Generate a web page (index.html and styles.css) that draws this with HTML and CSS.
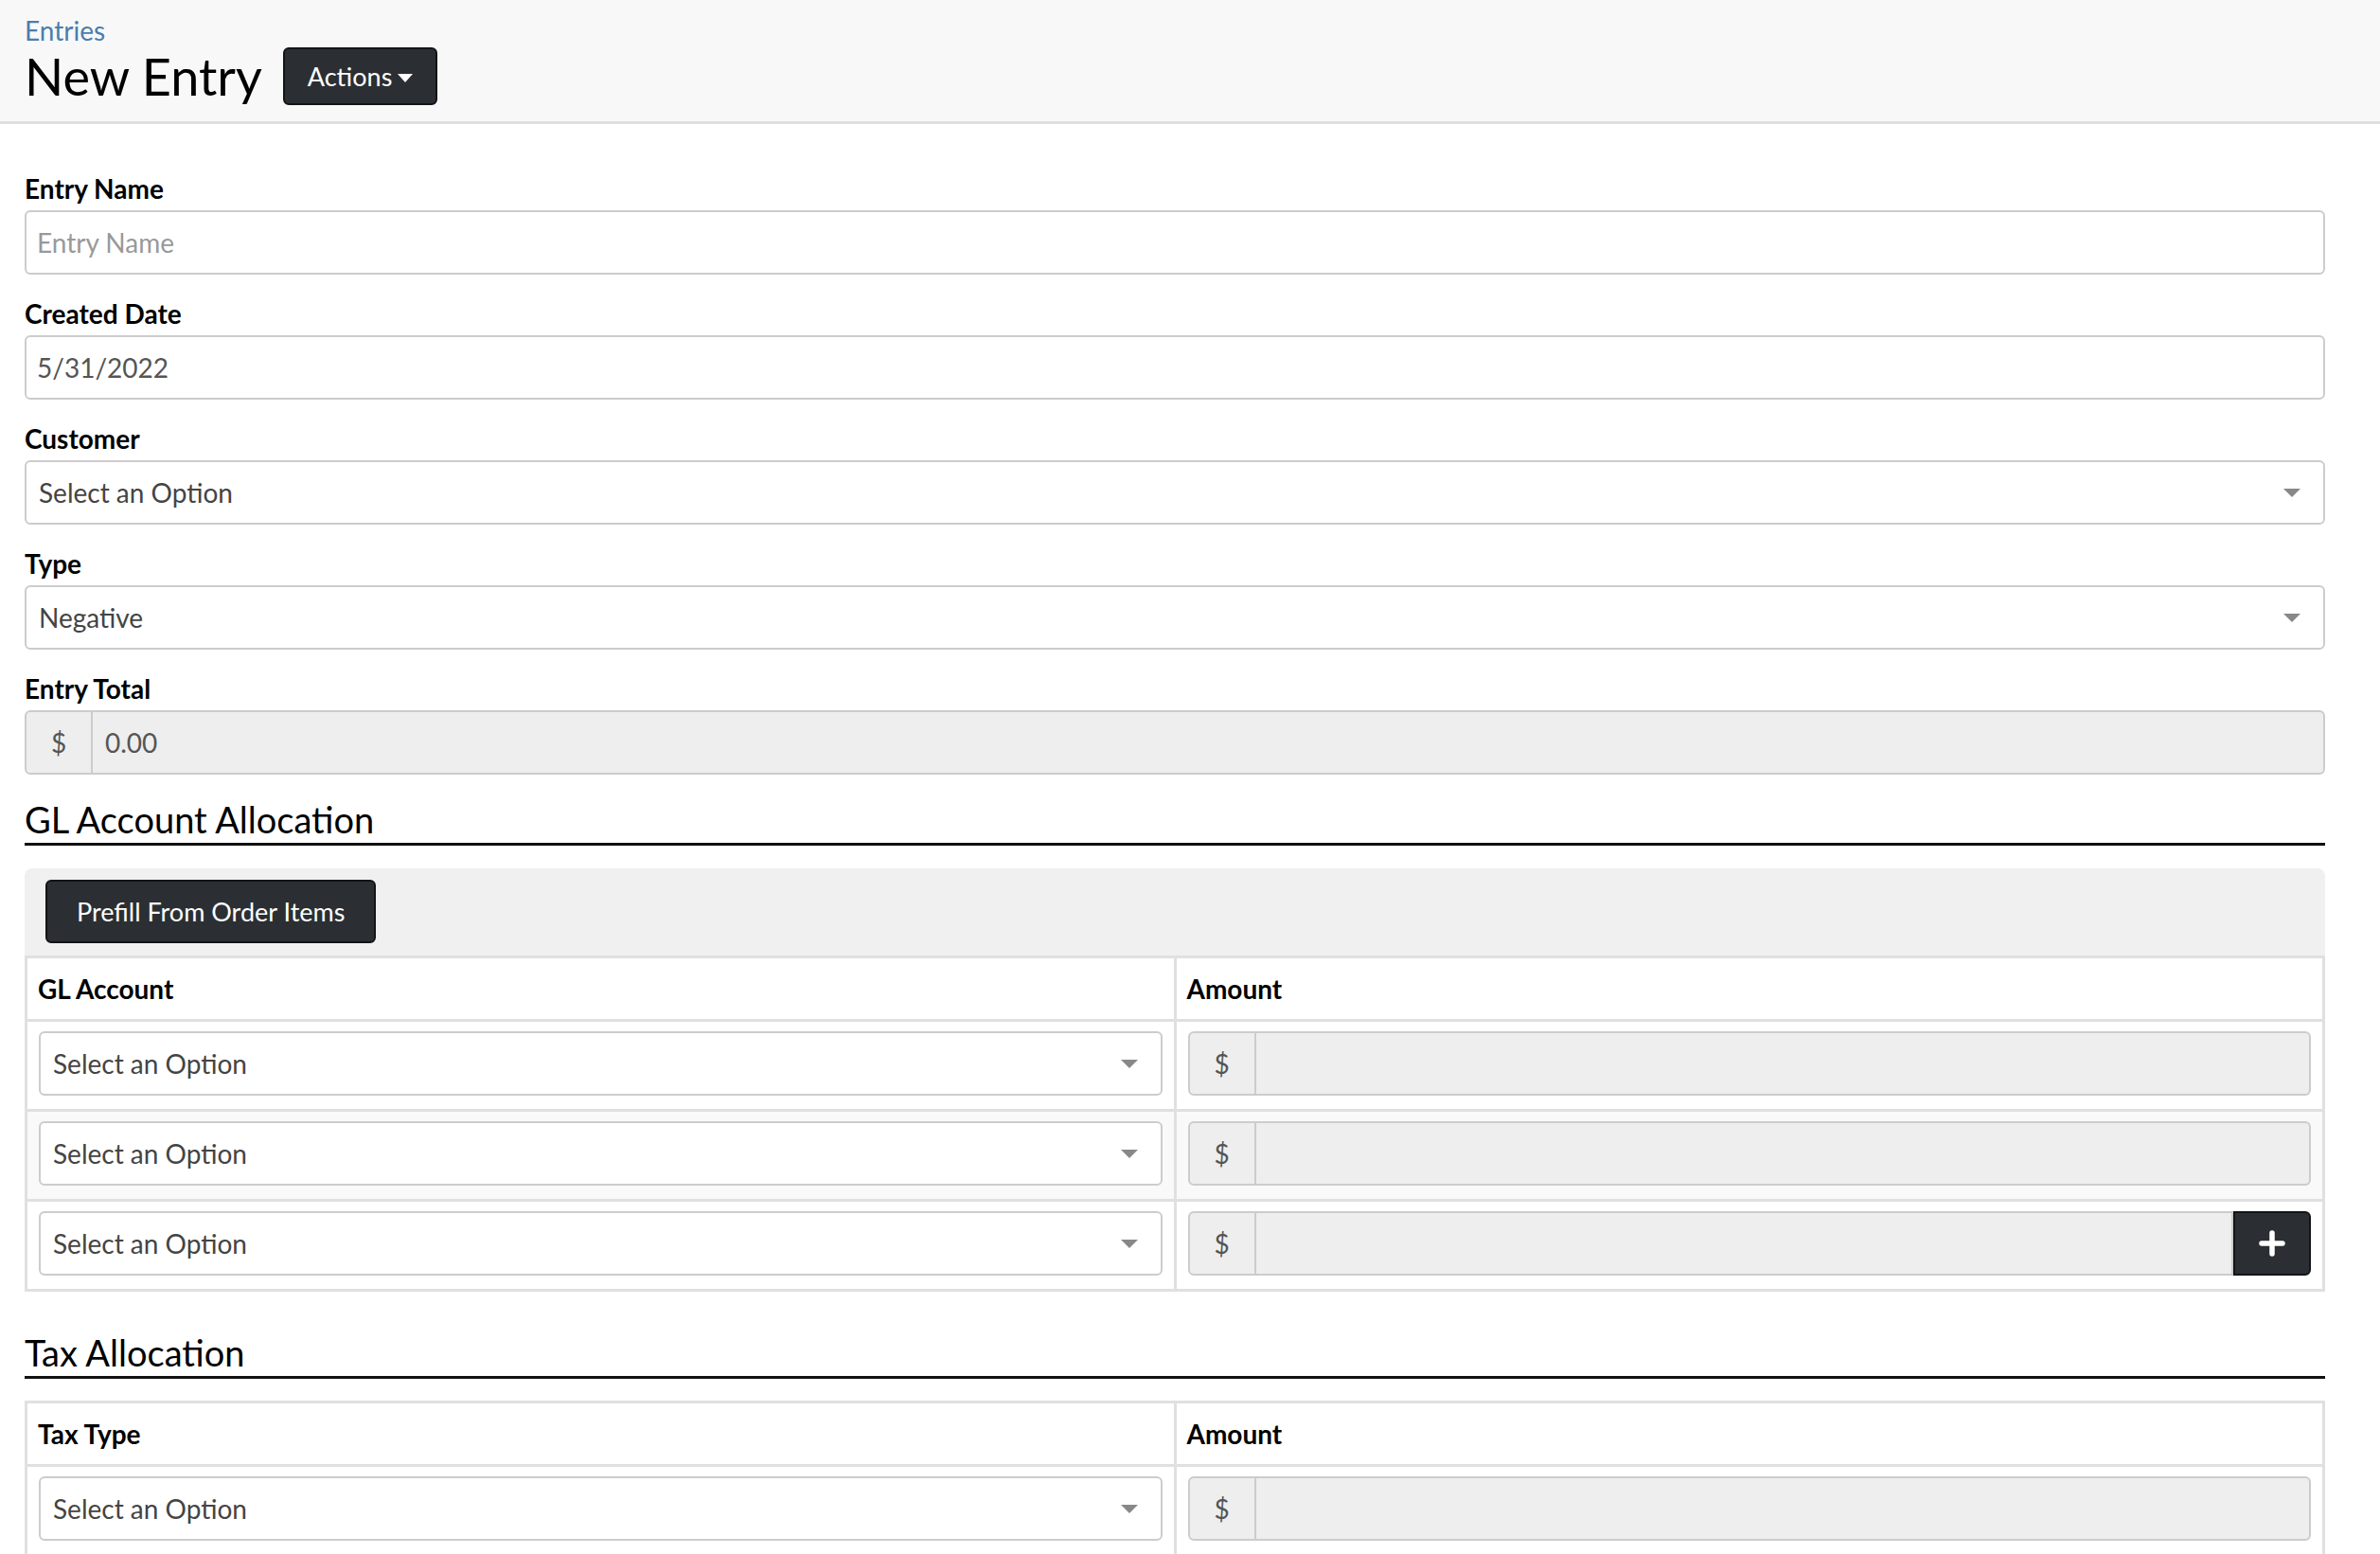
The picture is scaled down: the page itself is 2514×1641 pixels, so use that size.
FILE: index.html
```html
<!DOCTYPE html>
<html lang="en">
<head>
<meta charset="utf-8">
<title>New Entry</title>
<link rel="stylesheet" href="styles.css">
</head>
<body>
<header class="page-header">
  <a class="crumb" href="#">Entries</a>
  <div class="title-row">
    <h1 class="title">New Entry</h1>
    <button class="btn btn-actions" type="button">Actions
      <svg class="caret" viewBox="0 0 16 9" width="16" height="9"><path d="M0 0h16L8 9z" fill="#fff"/></svg>
    </button>
  </div>
</header>

<main class="form">
  <div class="group">
    <label class="label">Entry Name</label>
    <div class="control"><span class="placeholder">Entry Name</span></div>
  </div>
  <div class="group">
    <label class="label">Created Date</label>
    <div class="control">5/31/2022</div>
  </div>
  <div class="group">
    <label class="label">Customer</label>
    <div class="control select"><span>Select an Option</span><svg class="arrow" viewBox="0 0 18 9" width="18" height="9"><path d="M0 0h18L9 9z" fill="#888"/></svg></div>
  </div>
  <div class="group">
    <label class="label">Type</label>
    <div class="control select"><span>Negative</span><svg class="arrow" viewBox="0 0 18 9" width="18" height="9"><path d="M0 0h18L9 9z" fill="#888"/></svg></div>
  </div>
  <div class="group">
    <label class="label">Entry Total</label>
    <div class="input-group">
      <span class="addon">$</span>
      <span class="ig-field">0.00</span>
    </div>
  </div>

  <h2 class="section-title">GL Account Allocation</h2>
  <div class="panel">
    <button class="btn btn-prefill" type="button">Prefill From Order Items</button>
  </div>
  <table class="table">
    <thead>
      <tr><th>GL Account</th><th>Amount</th></tr>
    </thead>
    <tbody>
      <tr>
        <td><div class="control select"><span>Select an Option</span><svg class="arrow" viewBox="0 0 18 9" width="18" height="9"><path d="M0 0h18L9 9z" fill="#888"/></svg></div></td>
        <td><div class="input-group"><span class="addon">$</span><span class="ig-field"></span></div></td>
      </tr>
      <tr class="striped">
        <td><div class="control select"><span>Select an Option</span><svg class="arrow" viewBox="0 0 18 9" width="18" height="9"><path d="M0 0h18L9 9z" fill="#888"/></svg></div></td>
        <td><div class="input-group"><span class="addon">$</span><span class="ig-field"></span></div></td>
      </tr>
      <tr>
        <td><div class="control select"><span>Select an Option</span><svg class="arrow" viewBox="0 0 18 9" width="18" height="9"><path d="M0 0h18L9 9z" fill="#888"/></svg></div></td>
        <td><div class="input-group"><span class="addon">$</span><span class="ig-field ig-mid"></span>
          <button class="plus-btn" type="button" aria-label="Add"><svg viewBox="0 0 28 28" width="28" height="28"><path d="M14 3v22M3 14h22" stroke="#fff" stroke-width="5.5" stroke-linecap="round"/></svg></button></div></td>
      </tr>
    </tbody>
  </table>

  <h2 class="section-title tax-title">Tax Allocation</h2>
  <table class="table">
    <thead>
      <tr><th>Tax Type</th><th>Amount</th></tr>
    </thead>
    <tbody>
      <tr>
        <td><div class="control select"><span>Select an Option</span><svg class="arrow" viewBox="0 0 18 9" width="18" height="9"><path d="M0 0h18L9 9z" fill="#888"/></svg></div></td>
        <td><div class="input-group"><span class="addon">$</span><span class="ig-field"></span></div></td>
      </tr>
    </tbody>
  </table>
</main>
</body>
</html>
```

FILE: styles.css
```css
* { box-sizing: border-box; }

body {
  margin: 0;
  font-family: Lato, "Open Sans", sans-serif;
  font-size: 28px;
  color: #000;
  background: #fff;
}

.page-header {
  background: #f8f8f8;
  border-bottom: 3px solid #dedede;
  padding: 17px 26px 17px;
}

.crumb {
  display: block;
  color: #4b7dad;
  text-decoration: none;
  font-size: 28px;
  line-height: 30px;
}

.title-row {
  display: flex;
  align-items: center;
  gap: 22px;
  margin-top: 3px;
  height: 61px;
}

.title {
  margin: 0;
  font-weight: 400;
  font-size: 54px;
  line-height: 61px;
}

.btn {
  font-family: inherit;
  font-size: 27px;
  color: #fff;
  background: #2b2f33;
  border: 2px solid #121416;
  border-radius: 6px;
  cursor: pointer;
}

.btn-actions {
  height: 61px;
  padding: 0 24px;
  display: flex;
  align-items: center;
  gap: 6px;
}

.caret { display: block; margin-top: 3px; }

.form {
  padding: 49px 58px 40px 26px;
}

.group { margin-bottom: 22px; }

.label {
  display: block;
  font-weight: 700;
  font-size: 28px;
  line-height: 38px;
  margin-bottom: 4px;
}

.control {
  height: 68px;
  border: 2px solid #ccc;
  border-radius: 6px;
  display: flex;
  align-items: center;
  padding: 0 11px;
  color: #555;
  background: #fff;
}

.placeholder { color: #999; }

.select {
  justify-content: space-between;
  padding: 0 24px 0 13px;
  color: #444;
}

.arrow { display: block; }

.input-group {
  display: flex;
  height: 68px;
}

.addon {
  width: 72px;
  flex: none;
  background: #eee;
  border: 2px solid #ccc;
  border-radius: 6px 0 0 6px;
  display: flex;
  align-items: center;
  justify-content: center;
  color: #555;
}

.ig-field {
  flex: 1;
  background: #eee;
  border: 2px solid #ccc;
  border-left: 0;
  border-radius: 0 6px 6px 0;
  padding-left: 13px;
  display: flex;
  align-items: center;
  color: #555;
}

.ig-mid { border-radius: 0; }

.plus-btn {
  width: 82px;
  flex: none;
  background: #2b2f33;
  border: 2px solid #121416;
  border-radius: 0 6px 6px 0;
  display: flex;
  align-items: center;
  justify-content: center;
  padding: 0;
}

.section-title {
  margin: 0 0 24px;
  font-weight: 400;
  font-size: 38px;
  line-height: 50px;
  border-bottom: 3px solid #111;
}

.tax-title { margin-top: 39px; margin-bottom: 23px; }

.panel {
  background: #f0f0f0;
  border-radius: 8px 8px 0 0;
  padding: 12px 22px 13px;
}

.btn-prefill {
  height: 67px;
  padding: 0 31px;
}

.table {
  width: 100%;
  border-collapse: collapse;
  table-layout: fixed;
}

.table th,
.table td {
  border: 3px solid #e0e0e0;
  width: 50%;
}

.table th {
  text-align: left;
  height: 67px;
  padding: 0 11px;
  font-weight: 700;
}

.table td {
  padding: 10px 12px 14px;
}

.table tr.striped td { background: #f9f9f9; }
```
